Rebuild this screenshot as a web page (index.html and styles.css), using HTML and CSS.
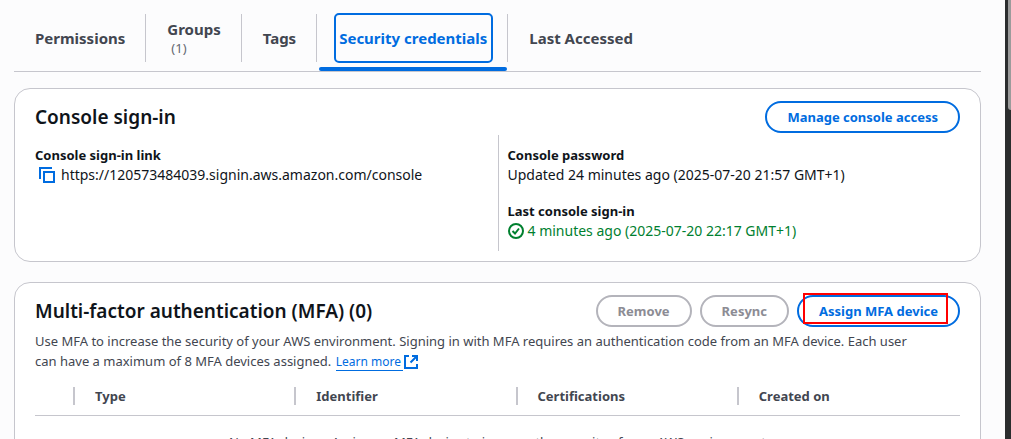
FILE: index.html
```html
<!DOCTYPE html>
<html lang="en">
<head>
<meta charset="utf-8">
<title>Security credentials</title>
<link rel="stylesheet" href="styles.css">
</head>
<body>
<div class="page">
  <main class="content">
    <div class="tabs" role="tablist">
      <button class="tab" type="button" role="tab">Permissions</button>
      <button class="tab" type="button" role="tab">Groups<span class="tab-count">(1)</span></button>
      <button class="tab" type="button" role="tab">Tags</button>
      <button class="tab tab-active" type="button" role="tab" aria-selected="true"><span class="focus-ring">Security credentials</span></button>
      <button class="tab" type="button" role="tab">Last Accessed</button>
    </div>

    <section class="card">
      <header class="card-header">
        <h2>Console sign-in</h2>
        <button class="btn" type="button">Manage console access</button>
      </header>
      <div class="details">
        <div class="details-col">
          <dl>
            <dt>Console sign-in link</dt>
            <dd class="copy-row">
              <button class="copy" type="button" aria-label="Copy sign-in link">
                <svg width="16" height="16" viewBox="0 0 16 16" fill="none" stroke="currentColor" stroke-width="2"><path d="M1 12V1h12"/><path d="M5 5h10v10H5z"/></svg>
              </button>
              <span>https://120573484039.signin.aws.amazon.com/console</span>
            </dd>
          </dl>
        </div>
        <div class="details-col details-divided">
          <dl>
            <dt>Console password</dt>
            <dd>Updated 24 minutes ago (2025-07-20 21:57 GMT+1)</dd>
          </dl>
          <dl>
            <dt>Last console sign-in</dt>
            <dd class="status">
              <svg width="16" height="16" viewBox="0 0 16 16" fill="none" stroke="currentColor" stroke-width="2"><circle cx="8" cy="8" r="7"/><path d="M4.500 8 7 10.500l4-5"/></svg>
              <span>4 minutes ago (2025-07-20 22:17 GMT+1)</span>
            </dd>
          </dl>
        </div>
      </div>
    </section>

    <section class="card card-mfa">
      <header class="card-header">
        <h2>Multi-factor authentication (MFA) (0)</h2>
        <div class="actions">
          <button class="btn" type="button" disabled>Remove</button>
          <button class="btn" type="button" disabled>Resync</button>
          <div class="marked">
            <button class="btn" type="button">Assign MFA device</button>
            <span class="marker"></span>
          </div>
        </div>
      </header>
      <p class="description">Use MFA to increase the security of your AWS environment. Signing in with MFA requires an authentication code from an MFA device. Each user can have a maximum of 8 MFA devices assigned. <a class="learn" href="#"><span class="learn-text">Learn more</span><svg width="14" height="14" viewBox="0 0 14 14" fill="none" stroke="currentColor" stroke-width="2"><path d="M5 1H1v12h12V9"/><path d="M8 1h5v5M13 1 6.500 7.500"/></svg></a></p>
      <table class="devices">
        <thead>
          <tr><th class="select-col" aria-label="Selection"></th><th>Type</th><th>Identifier</th><th>Certifications</th><th>Created on</th></tr>
        </thead>
        <tbody>
          <tr><td colspan="5">No MFA devices. Assign an MFA device to improve the security of your AWS environment</td></tr>
        </tbody>
      </table>
    </section>
  </main>
  <div class="scroll-track"><div class="scroll-thumb"></div></div>
</div>
</body>
</html>
```
FILE: styles.css
```css
* { box-sizing: border-box; }

body {
  margin: 0;
  background: #fcfcfd;
  color: #0f141a;
  font: 14px/20px "Noto Sans", "Open Sans", sans-serif;
}

button { font: inherit; cursor: pointer; }
svg { flex: none; display: block; }
h2, p, dl, dd { margin: 0; }

.page { display: flex; height: 100vh; overflow: hidden; }
.content { flex: 1; min-width: 0; padding: 0 24px 0 14px; }

.scroll-track { width: 6px; padding-left: 3px; background: #2b2d2e; }
.scroll-thumb { height: 25%; background: #9b9b9b; border-radius: 0 0 0 3px; }

.tabs {
  display: flex;
  height: 72px;
  border-bottom: 1px solid #c6c6cd;
}
.tab {
  position: relative;
  display: flex;
  flex-direction: column;
  justify-content: center;
  align-items: flex-start;
  padding: 5px 21px 0;
  border: 0;
  background: none;
  color: #424650;
  font-size: 15px;
  font-weight: 700;
  line-height: 20px;
  white-space: nowrap;
}
.tab:not(:last-child)::after {
  content: "";
  position: absolute;
  right: 0;
  top: 14px;
  height: 48px;
  border-right: 1px solid #c6c6cd;
}
.tab-count { padding-left: 4px; color: #656871; font-size: 13px; font-weight: 400; line-height: 18px; }
.tab-active { padding: 5px 15px 0 17px; color: #006ce0; }
.tab-active::before {
  content: "";
  position: absolute;
  left: 2px;
  right: 1px;
  bottom: 0;
  height: 4px;
  border-radius: 2px;
  background: #006ce0;
}
.focus-ring {
  display: flex;
  align-items: center;
  height: 50px;
  padding: 0 4px 0 3px;
  border: 2px solid #006ce0;
  border-radius: 5px;
}

.card {
  margin-top: 16px;
  padding: 12px 20px 10px;
  border: 1px solid #c6c6cd;
  border-radius: 16px;
  background: #fff;
}
.card-mfa { margin-top: 20px; }
.card-header { display: flex; justify-content: space-between; align-items: center; }
h2 { font-size: 19px; line-height: 24px; font-weight: 600; }

.btn {
  height: 32px;
  padding: 0 20px;
  border: 2px solid #006ce0;
  border-radius: 16px;
  background: #fff;
  color: #006ce0;
  font-size: 13px;
  font-weight: 700;
  line-height: 20px;
  white-space: nowrap;
}
.btn:disabled { border-color: #b4b4bb; color: #8c8c94; }
.actions { display: flex; gap: 8px; }
.marked { position: relative; }
.marker {
  position: absolute;
  inset: -2px 12px 3px 6px;
  border: 2px solid #f00;
  pointer-events: none;
}

.details { display: grid; grid-template-columns: 1fr 1fr; margin-top: 2px; }
.details-col { display: grid; gap: 16px; align-content: start; padding: 10px 0; }
.details-divided { border-left: 1px solid #c6c6cd; padding-left: 9px; }
dt { font-size: 13px; font-weight: 700; }
.copy-row { display: flex; align-items: center; gap: 6px; padding-left: 4px; }
.copy { padding: 0; border: 0; background: none; color: #006ce0; }
.status { display: flex; align-items: center; gap: 4px; color: #00802f; }

.description { margin-top: 4px; padding-right: 40px; color: #424650; font-size: 13px; }
.learn {
  display: inline-flex;
  align-items: center;
  gap: 1px;
  height: 18px;
  margin-left: 1px;
  vertical-align: bottom;
  color: #006ce0;
  font-size: 12px;
  line-height: 16px;
  text-decoration: none;
}
.learn-text { padding-right: 2px; border-bottom: 1px solid #006ce0; }

.devices {
  width: 100%;
  margin-top: 6px;
  border-collapse: collapse;
  table-layout: fixed;
  color: #424650;
  font-size: 13px;
}
.devices th {
  position: relative;
  height: 38px;
  padding: 0 20px;
  border-bottom: 1px solid #c6c6cd;
  text-align: left;
  font-weight: 700;
}
.devices th:not(:last-child)::after {
  content: "";
  position: absolute;
  right: 0;
  top: 10px;
  height: 18px;
  border-right: 2px solid #c6c6cd;
}
.devices .select-col { width: 40px; padding: 0; }
.devices td { padding: 16px 20px; text-align: center; }
```
